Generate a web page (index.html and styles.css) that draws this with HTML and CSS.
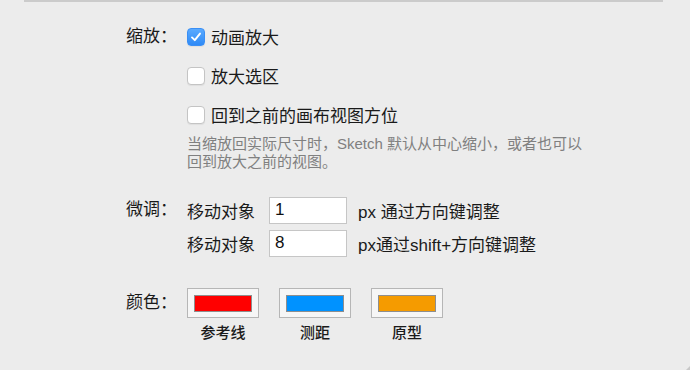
FILE: index.html
```html
<!DOCTYPE html>
<html lang="zh-CN">
<head>
  <meta charset="UTF-8" />
  <title>偏好设置</title>
  <link rel="stylesheet" href="styles.css">
</head>
<body>
  <div class="divider"></div>

  <div class="prefs">
    <div class="group zoom">
      <div class="label">缩放：</div>
      <div class="options">
        <div class="check-row">
          <span class="checkbox checked">
            <svg width="12" height="12" viewBox="0 0 12 12"><path d="M2 6.4 L4.8 9.2 L10 2.6" fill="none" stroke="#fff" stroke-width="1.9" stroke-linecap="round" stroke-linejoin="round"/></svg>
          </span>
          <span>动画放大</span>
        </div>
        <div class="check-row">
          <span class="checkbox"></span>
          <span>放大选区</span>
        </div>
        <div class="check-row">
          <span class="checkbox"></span>
          <span>回到之前的画布视图方位</span>
        </div>
        <p class="hint">当缩放回实际尺寸时，Sketch 默认从中心缩小，或者也可以回到放大之前的视图。</p>
      </div>
    </div>

    <div class="group nudge">
      <div class="label">微调：</div>
      <div class="options">
        <div class="nudge-row">
          <span>移动对象</span>
          <input class="num" type="text" value="1" />
          <span>px 通过方向键调整</span>
        </div>
        <div class="nudge-row">
          <span>移动对象</span>
          <input class="num" type="text" value="8" />
          <span>px通过shift+方向键调整</span>
        </div>
      </div>
    </div>

    <div class="group colors">
      <div class="label">颜色：</div>
      <div class="swatches">
        <div class="swatch">
          <div class="well"><div class="fill red"></div></div>
          <div class="swatch-name">参考线</div>
        </div>
        <div class="swatch">
          <div class="well"><div class="fill blue"></div></div>
          <div class="swatch-name">测距</div>
        </div>
        <div class="swatch">
          <div class="well"><div class="fill orange"></div></div>
          <div class="swatch-name">原型</div>
        </div>
      </div>
    </div>
  </div>

  <div class="grip"></div>
</body>
</html>
```

FILE: styles.css
```css
body {
  margin: 0;
  width: 690px;
  height: 370px;
  background: #ececec;
  font-family: 'Liberation Sans', 'Noto Sans CJK SC', sans-serif;
  font-size: 17px;
  color: #1a1a1a;
  overflow: hidden;
  position: relative;
}
.divider {
  margin-left: 24px;
  width: 639px;
  height: 2px;
  background: #cbcbcb;
}
.prefs {
  padding-left: 126px;
}
.group {
  display: flex;
}
.label {
  width: 61px;
  flex-shrink: 0;
  line-height: 39px;
}
.zoom {
  margin-top: 15px;
}
.check-row {
  height: 39px;
  display: flex;
  align-items: center;
  gap: 6px;
}
.checkbox {
  width: 16px;
  height: 16px;
  border: 1px solid #c4c4c4;
  border-radius: 4px;
  background: #fff;
  box-shadow: 0 1px 1px rgba(0, 0, 0, 0.06);
  display: flex;
  align-items: center;
  justify-content: center;
}
.checkbox.checked {
  border-color: #3a8ff5;
  background: linear-gradient(#5aaaff, #2f8af6);
}
.hint {
  margin: 1px 0 0;
  width: 400px;
  font-size: 15px;
  line-height: 18px;
  color: #808080;
}
.nudge {
  margin-top: 25px;
}
.nudge .label {
  line-height: 28px;
}
.nudge-row {
  height: 28px;
  display: flex;
  align-items: center;
  margin-bottom: 5px;
}
.num {
  width: 71px;
  height: 25px;
  margin: 0 11px 0 14px;
  padding: 0 0 0 5px;
  border: 1px solid #c6c6c6;
  background: #fff;
  font-family: 'Liberation Sans', sans-serif;
  font-size: 17px;
  color: #111;
  outline: none;
}
.colors {
  margin-top: 26px;
}
.colors .label {
  line-height: 30px;
}
.swatches {
  display: flex;
  gap: 20px;
}
.swatch {
  width: 72px;
  display: flex;
  flex-direction: column;
  align-items: center;
}
.well {
  box-sizing: border-box;
  width: 72px;
  height: 30px;
  border: 1px solid #b6b6b6;
  background: #f6f6f6;
  display: flex;
  align-items: center;
  justify-content: center;
}
.fill {
  box-sizing: border-box;
  width: 58px;
  height: 17px;
  border: 1px solid #8e8e8e;
}
.red { background: #ff0000; }
.blue { background: #0092ff; }
.orange { background: #f59b00; }
.swatch-name {
  margin-top: 6px;
  font-size: 15px;
  line-height: 18px;
  font-weight: 500;
  color: #1a1a1a;
}
.grip {
  position: absolute;
  right: 0;
  bottom: 0;
  width: 0;
  height: 0;
  border-left: 4px solid transparent;
  border-bottom: 4px solid #c8c8c8;
}
```
